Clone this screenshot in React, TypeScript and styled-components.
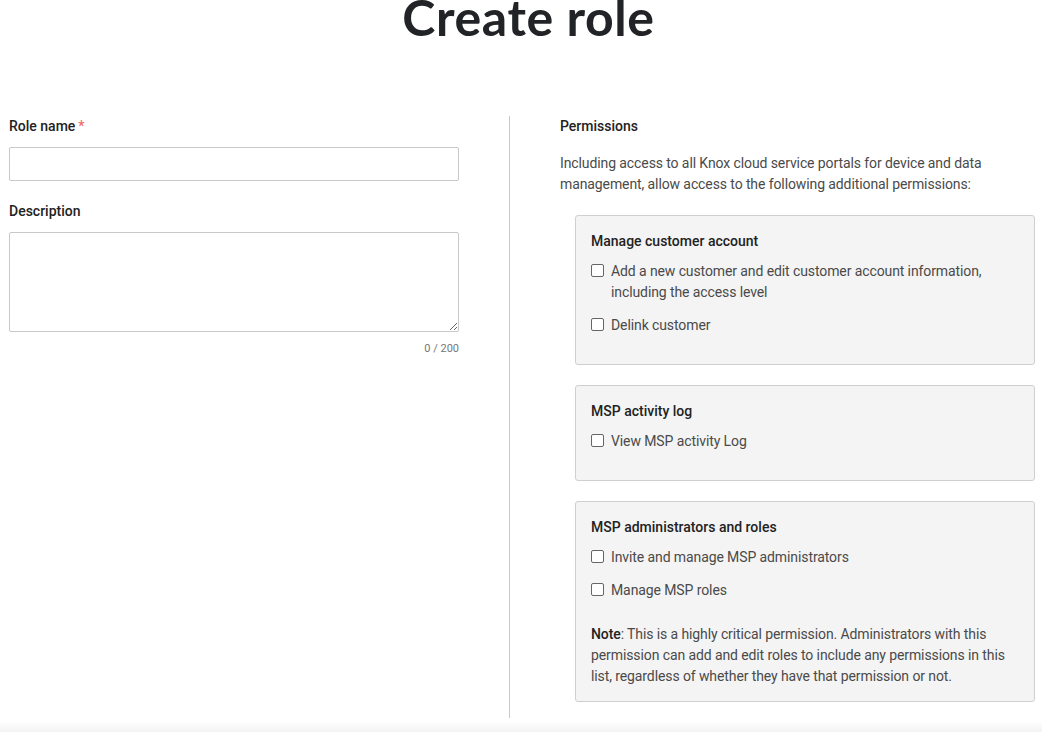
import styled, { createGlobalStyle } from 'styled-components';

const GlobalStyle = createGlobalStyle`
  html, body {
    margin: 0;
    padding: 0;
    background: #fff;
  }
  body {
    font-family: Roboto, "Noto Sans", "Liberation Sans", sans-serif;
    color: #4a4a4a;
  }
  * {
    box-sizing: border-box;
  }
`;

type Permission = {
  id: string;
  label: string;
};

type PermissionGroup = {
  title: string;
  items: Permission[];
  note?: string;
};

const groups: PermissionGroup[] = [
  {
    title: 'Manage customer account',
    items: [
      {
        id: 'customer-edit',
        label:
          'Add a new customer and edit customer account information, including the access level',
      },
      { id: 'customer-delink', label: 'Delink customer' },
    ],
  },
  {
    title: 'MSP activity log',
    items: [{ id: 'activity-log', label: 'View MSP activity Log' }],
  },
  {
    title: 'MSP administrators and roles',
    items: [
      { id: 'admins', label: 'Invite and manage MSP administrators' },
      { id: 'roles', label: 'Manage MSP roles' },
    ],
    note: 'This is a highly critical permission. Administrators with this permission can add and edit roles to include any permissions in this list, regardless of whether they have that permission or not.',
  },
];

const App = () => {
  return (
    <Page>
      <GlobalStyle />
      <Title>Create role</Title>
      <Content>
        <LeftColumn>
          <Field>
            <FieldLabel htmlFor="role-name">
              Role name<Required>*</Required>
            </FieldLabel>
            <TextInput id="role-name" type="text" />
          </Field>
          <Field>
            <FieldLabel htmlFor="role-description">Description</FieldLabel>
            <TextArea id="role-description" />
            <Counter>0 / 200</Counter>
          </Field>
        </LeftColumn>
        <RightColumn>
          <SectionLabel>Permissions</SectionLabel>
          <Intro>
            Including access to all Knox cloud service portals for device and
            data management, allow access to the following additional
            permissions:
          </Intro>
          <GroupList>
            {groups.map((group) => (
              <GroupBox key={group.title}>
                <GroupTitle>{group.title}</GroupTitle>
                {group.items.map((item) => (
                  <CheckRow key={item.id}>
                    <Checkbox type="checkbox" id={item.id} />
                    <CheckLabel htmlFor={item.id}>{item.label}</CheckLabel>
                  </CheckRow>
                ))}
                {group.note && (
                  <Note>
                    <strong>Note</strong>: {group.note}
                  </Note>
                )}
              </GroupBox>
            ))}
          </GroupList>
        </RightColumn>
      </Content>
      <Footer />
    </Page>
  );
};

export default App;

const Page = styled.div`
  display: flex;
  flex-direction: column;
  overflow: hidden;
`;

const Title = styled.h1`
  margin: -13px 0 0 0;
  padding-left: 15px;
  height: 129px;
  text-align: center;
  font-family: Lato, "Noto Sans", sans-serif;
  font-size: 50px;
  font-weight: 700;
  letter-spacing: 0.6px;
  line-height: 60px;
  color: #222326;
`;

const Content = styled.div`
  display: flex;
  padding: 0 7px 0 9px;
`;

const LeftColumn = styled.div`
  width: 450px;
  flex-shrink: 0;
  margin-right: 50px;
`;

const Field = styled.div`
  display: flex;
  flex-direction: column;
  margin-bottom: 20px;
`;

const FieldLabel = styled.label`
  font-size: 14px;
  line-height: 20px;
  font-weight: 500;
  color: #222;
  margin-bottom: 11px;
`;

const Required = styled.span`
  color: #f26b6b;
  margin-left: 3px;
`;

const TextInput = styled.input`
  height: 34px;
  width: 100%;
  border: 1px solid #c8c8c8;
  border-radius: 2px;
  padding: 0 10px;
  font-size: 14px;
  outline: none;
`;

const TextArea = styled.textarea`
  height: 100px;
  width: 100%;
  border: 1px solid #c8c8c8;
  border-radius: 2px;
  padding: 8px 10px;
  font-size: 14px;
  resize: vertical;
  outline: none;
`;

const Counter = styled.span`
  align-self: flex-end;
  margin-top: 10px;
  font-size: 11px;
  line-height: 14px;
  color: #777;
`;

const RightColumn = styled.div`
  flex: 1;
  border-left: 1px solid #c8c8c8;
  padding: 0 0 16px 50px;
`;

const SectionLabel = styled.div`
  font-size: 14px;
  line-height: 20px;
  font-weight: 500;
  color: #222;
`;

const Intro = styled.p`
  margin: 17px 0 20px;
  font-size: 14px;
  line-height: 21px;
  letter-spacing: -0.1px;
`;

const GroupList = styled.div`
  display: flex;
  flex-direction: column;
  gap: 20px;
  margin-left: 15px;
`;

const GroupBox = styled.div`
  background: #f4f4f4;
  border: 1px solid #cfcfcf;
  border-radius: 3px;
  padding: 15px 15px 16px;
`;

const GroupTitle = styled.div`
  font-size: 14px;
  line-height: 20px;
  font-weight: 500;
  color: #222;
  margin-bottom: 10px;
`;

const CheckRow = styled.div`
  display: flex;
  align-items: flex-start;
  gap: 7px;
  margin-bottom: 12px;
`;

const Checkbox = styled.input`
  appearance: none;
  flex-shrink: 0;
  width: 13px;
  height: 13px;
  margin: 3px 0 0;
  border: 1px solid #666;
  border-radius: 2px;
  background: #fff;
`;

const CheckLabel = styled.label`
  font-size: 14px;
  line-height: 21px;
  letter-spacing: -0.1px;
`;

const Note = styled.p`
  margin: 23px 0 -2px;
  font-size: 14px;
  line-height: 21px;
  letter-spacing: -0.1px;

  strong {
    font-weight: 500;
    color: #222;
  }
`;

const Footer = styled.div`
  height: 40px;
  margin-top: 3px;
  background: linear-gradient(to bottom, #fff 0, #f2f2f2 12px);
`;
